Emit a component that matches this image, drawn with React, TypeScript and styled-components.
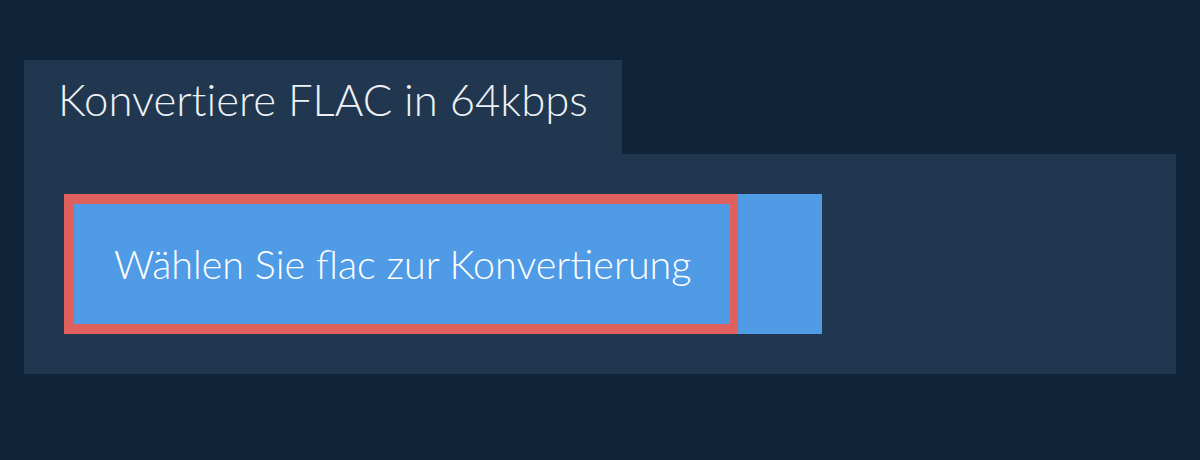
import React from 'react';
import styled, { createGlobalStyle } from 'styled-components';

const GlobalStyle = createGlobalStyle`
  html, body {
    margin: 0;
    padding: 0;
    background: #0f2439;
  }

  body {
    font-family: Lato, 'Noto Sans', sans-serif;
    font-variant-ligatures: none;
  }
`;

const Page = styled.div`
  width: 1200px;
  height: 460px;
  box-sizing: border-box;
  padding: 60px 24px 0;
  background: #0f2439;
`;

const Tab = styled.div`
  display: inline-flex;
  align-items: center;
  height: 94px;
  padding: 0 34px 16px;
  box-sizing: border-box;
  background: #213750;
  color: #eef2f6;
  font-size: 43.7px;
  font-weight: 300;
  vertical-align: top;
`;

const Panel = styled.div`
  height: 220px;
  box-sizing: border-box;
  padding: 40px;
  background: #213750;
`;

const PickButton = styled.button`
  display: flex;
  width: 758px;
  height: 140px;
  padding: 0 84px 0 0;
  border: none;
  background: #4f9be6;
  cursor: pointer;
  font-family: inherit;
`;

const Label = styled.span`
  display: flex;
  align-items: center;
  flex: 1;
  box-sizing: border-box;
  padding: 0 0 2px 40px;
  border: 10px solid #e0605e;
  border-right-width: 8px;
  color: #ffffff;
  font-size: 39.5px;
  font-weight: 300;
  white-space: nowrap;
`;

export default function App() {
  return (
    <>
      <GlobalStyle />
      <Page>
        <Tab>Konvertiere FLAC in 64kbps</Tab>
        <Panel>
          <PickButton type="button">
            <Label>Wählen Sie flac zur Konvertierung</Label>
          </PickButton>
        </Panel>
      </Page>
    </>
  );
}
